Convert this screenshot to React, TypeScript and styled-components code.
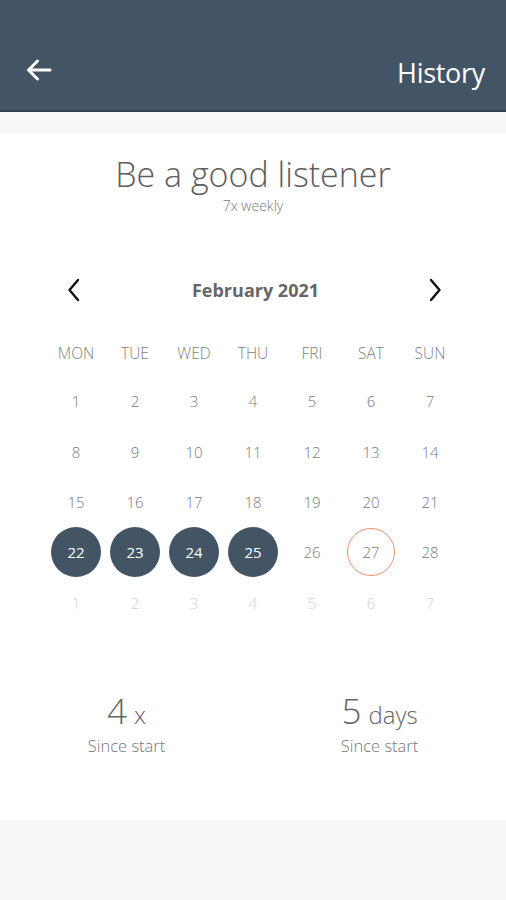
import React from 'react';
import styled, { createGlobalStyle } from 'styled-components';

const GlobalStyle = createGlobalStyle`
  html, body {
    margin: 0;
    padding: 0;
    background: #f7f7f7;
    font-family: 'Open Sans', 'Noto Sans', sans-serif;
  }
  * {
    box-sizing: border-box;
  }
`;

const Screen = styled.div`
  width: 506px;
  min-height: 900px;
  background: #f7f7f7;
  display: flex;
  flex-direction: column;
`;

const TopBar = styled.header`
  height: 112px;
  background: #435565;
  border-bottom: 2px solid #2f3f4c;
  display: flex;
  align-items: flex-end;
  justify-content: space-between;
  padding: 0 21px 19px 26px;
  color: #fff;
`;

const BackButton = styled.button`
  background: none;
  border: 0;
  padding: 0;
  margin-bottom: 10px;
  display: flex;
  cursor: pointer;
`;

const Title = styled.h1`
  margin: 0;
  font-size: 27px;
  font-weight: 400;
  letter-spacing: -0.3px;
  line-height: 36px;
`;

const Card = styled.main`
  margin-top: 21px;
  background: #fff;
  height: 687px;
  display: flex;
  flex-direction: column;
  align-items: center;
`;

const HabitName = styled.h2`
  margin: 21px 0 0;
  font-size: 34px;
  font-weight: 300;
  line-height: 40px;
  color: #5e5e5e;
`;

const Frequency = styled.p`
  margin: 3px 0 0;
  font-size: 14px;
  font-weight: 300;
  line-height: 18px;
  color: #777;
`;

const MonthNav = styled.div`
  width: 100%;
  margin-top: 63px;
  padding: 0 64px 0 67px;
  display: flex;
  align-items: center;
  justify-content: space-between;
  height: 24px;
`;

const NavButton = styled.button`
  background: none;
  border: 0;
  padding: 0;
  display: flex;
  cursor: pointer;
`;

const MonthLabel = styled.span`
  font-size: 18px;
  font-weight: 700;
  color: #666;
  margin-left: 2px;
`;

const Grid = styled.div`
  width: 100%;
  margin-top: 28px;
  padding: 0 46.5px;
  display: grid;
  grid-template-columns: repeat(7, 1fr);
  grid-template-rows: 46px repeat(5, 50.4px);
`;

const WeekDay = styled.div`
  display: flex;
  align-items: center;
  justify-content: center;
  font-size: 15.5px;
  font-weight: 300;
  color: #808080;
`;

type DayVariant = 'normal' | 'done' | 'today' | 'outside';

const DayCell = styled.div`
  display: flex;
  align-items: center;
  justify-content: center;
`;

const Day = styled.span<{ $variant: DayVariant }>`
  width: ${({ $variant }) => ($variant === 'today' ? '48px' : '50px')};
  height: ${({ $variant }) => ($variant === 'today' ? '48px' : '50px')};
  border-radius: 50%;
  display: flex;
  align-items: center;
  justify-content: center;
  font-size: 15px;
  font-weight: ${({ $variant }) => ($variant === 'done' ? 500 : 300)};
  color: ${({ $variant }) =>
    $variant === 'done' ? '#fff' : $variant === 'outside' ? '#cfcfcf' : '#7a7a7a'};
  background: ${({ $variant }) => ($variant === 'done' ? '#435565' : 'transparent')};
  border: ${({ $variant }) => ($variant === 'today' ? '1.5px solid #f3916a' : 'none')};
`;

const Stats = styled.div`
  width: 100%;
  margin-top: 63px;
  display: grid;
  grid-template-columns: 1fr 1fr;
`;

const Stat = styled.div`
  display: flex;
  flex-direction: column;
  align-items: center;
`;

const StatValue = styled.div`
  font-size: 35px;
  font-weight: 300;
  line-height: 40px;
  color: #666;
  span {
    font-size: 24px;
    margin-left: 7px;
  }
`;

const StatLabel = styled.div`
  font-size: 16.5px;
  font-weight: 300;
  color: #777;
  line-height: 22px;
  margin-top: 0;
`;

const weekDays = ['MON', 'TUE', 'WED', 'THU', 'FRI', 'SAT', 'SUN'];
const done = [22, 23, 24, 25];
const today = 27;

const days: { n: number; variant: DayVariant }[] = [
  ...Array.from({ length: 28 }, (_, i) => {
    const n = i + 1;
    const variant: DayVariant = done.includes(n) ? 'done' : n === today ? 'today' : 'normal';
    return { n, variant };
  }),
  ...Array.from({ length: 7 }, (_, i) => ({ n: i + 1, variant: 'outside' as DayVariant })),
];

const Chevron = ({ dir }: { dir: 'left' | 'right' }) => (
  <svg width="14" height="24" viewBox="0 0 14 24" fill="none">
    <path
      d={dir === 'left' ? 'M11 2 L2.5 12 L11 22' : 'M3 2 L11.5 12 L3 22'}
      stroke="#111"
      strokeWidth="2.4"
      strokeLinecap="round"
      strokeLinejoin="round"
    />
  </svg>
);

export default function App() {
  return (
    <>
      <GlobalStyle />
      <Screen>
        <TopBar>
          <BackButton aria-label="Back">
            <svg width="26" height="22" viewBox="0 0 26 22" fill="none">
              <path
                d="M24 11 H3 M11.5 2 L2.5 11 L11.5 20"
                stroke="#fff"
                strokeWidth="3"
                strokeLinecap="round"
                strokeLinejoin="round"
              />
            </svg>
          </BackButton>
          <Title>History</Title>
        </TopBar>
        <Card>
          <HabitName>Be a good listener</HabitName>
          <Frequency>7x weekly</Frequency>
          <MonthNav>
            <NavButton aria-label="Previous month">
              <Chevron dir="left" />
            </NavButton>
            <MonthLabel>February 2021</MonthLabel>
            <NavButton aria-label="Next month">
              <Chevron dir="right" />
            </NavButton>
          </MonthNav>
          <Grid>
            {weekDays.map((d) => (
              <WeekDay key={d}>{d}</WeekDay>
            ))}
            {days.map((d, i) => (
              <DayCell key={i}>
                <Day $variant={d.variant}>{d.n}</Day>
              </DayCell>
            ))}
          </Grid>
          <Stats>
            <Stat>
              <StatValue>
                4<span>x</span>
              </StatValue>
              <StatLabel>Since start</StatLabel>
            </Stat>
            <Stat>
              <StatValue>
                5<span>days</span>
              </StatValue>
              <StatLabel>Since start</StatLabel>
            </Stat>
          </Stats>
        </Card>
      </Screen>
    </>
  );
}
